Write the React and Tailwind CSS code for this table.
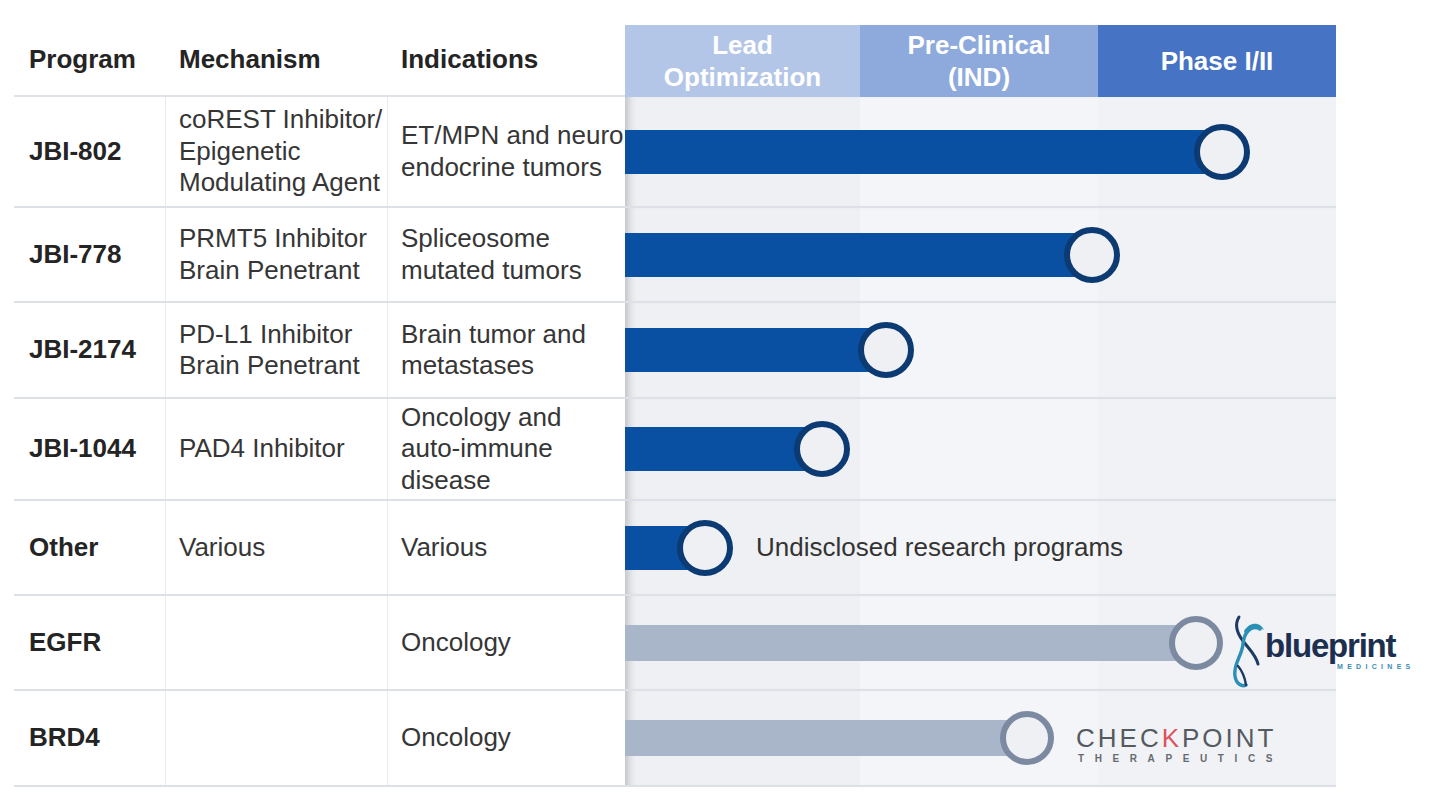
const rows = [
  { prog: 'JBI-802', mech: ['coREST Inhibitor/', 'Epigenetic', 'Modulating Agent'], ind: ['ET/MPN and neuro', 'endocrine tumors'], h: 'h-[111px]', pos: 597 },
  { prog: 'JBI-778', mech: ['PRMT5 Inhibitor', 'Brain Penetrant'], ind: ['Spliceosome', 'mutated tumors'], h: 'h-[95px]', pos: 467 },
  { prog: 'JBI-2174', mech: ['PD-L1 Inhibitor', 'Brain Penetrant'], ind: ['Brain tumor and', 'metastases'], h: 'h-[96px]', pos: 261 },
  { prog: 'JBI-1044', mech: ['PAD4 Inhibitor'], ind: ['Oncology and', 'auto-immune', 'disease'], h: 'h-[102px]', pos: 197 },
  { prog: 'Other', mech: ['Various'], ind: ['Various'], h: 'h-[95px]', pos: 80, note: 'Undisclosed research programs' },
  { prog: 'EGFR', mech: [], ind: ['Oncology'], h: 'h-[95px]', pos: 571, partner: 'blueprint' },
  { prog: 'BRD4', mech: [], ind: ['Oncology'], h: 'h-[96px]', pos: 402, partner: 'checkpoint' },
];

const BlueprintLogo = () => (
  <div className="ml-[6px] mt-[16px] flex shrink-0 items-center">
    <svg width="36" height="74" viewBox="0 0 36 74" className="shrink-0">
      <path d="M10 3 C 5 11, 8 19, 14 27 C 20 35, 27 41, 29 50" fill="none" stroke="#1c3a63" strokeWidth="3" strokeLinecap="round" />
      <path d="M31 15 C 23 10, 15 18, 14 30 C 13 42, 4 50, 6 62 C 7 70, 13 73, 17 71" fill="none" stroke="#2c8fb6" strokeWidth="3.4" strokeLinecap="round" />
      <path d="M15 17 C 20 8, 31 7, 35 16 C 29 12, 22 13, 17 22 Z" fill="#2c8fb6" />
      <path d="M9 52 C 14 58, 16 64, 17 71" fill="none" stroke="#1c3a63" strokeWidth="2.4" strokeLinecap="round" />
    </svg>
    <div className="flex flex-col">
      <span className="text-[33px] font-bold leading-[32px] tracking-[-1.2px] text-[#1d2f4f]">blueprint</span>
      <span className="ml-[72px] text-[7px] font-bold leading-[10px] tracking-[4.3px] text-[#3b8db0]">MEDICINES</span>
    </div>
  </div>
);

const CheckpointLogo = () => (
  <div className="ml-[22px] mt-[14px] flex shrink-0 flex-col">
    <span className="text-[26px] leading-[28px] tracking-[3px] text-[#555a60]">
      CHEC<span className="text-[#e0525c]">K</span>POINT
    </span>
    <span className="pl-[2px] text-[10px] font-bold leading-[14px] tracking-[10.6px] text-[#666a70]">THERAPEUTICS</span>
  </div>
);

const Track = ({ row }) => {
  const gray = !!row.partner;
  return (
    <div className="flex items-center">
      <div
        className={gray ? 'h-[36px] shrink-0 bg-[#a9b5c9]' : 'h-[44px] shrink-0 bg-[#0a50a2]'}
        style={{ width: row.pos }}
      />
      <div
        className={
          gray
            ? '-ml-[27px] size-[54px] shrink-0 rounded-full border-[6px] border-[#7b8aa1] bg-[#eef0f4]'
            : '-ml-[28px] size-[56px] shrink-0 rounded-full border-[6px] border-[#0c3a72] bg-[#eef0f4]'
        }
      />
      {row.note && <span className="ml-[23px] shrink-0 whitespace-nowrap text-[#333]">{row.note}</span>}
      {row.partner === 'blueprint' && <BlueprintLogo />}
      {row.partner === 'checkpoint' && <CheckpointLogo />}
    </div>
  );
};

export default function App() {
  return (
    <div className="h-[812px] w-[1440px] overflow-hidden bg-white pl-[14px] pt-[25px] font-['Liberation_Sans',Arial,sans-serif] text-[26px] leading-[31.5px] text-[#363636]">
      <div className="w-[1322px]">
        <div className="grid h-[72px] grid-cols-[151px_222px_238px_235px_238px_238px] font-bold">
          <div className="flex items-center border-b-2 border-[#dfe2e8] pl-[15px] text-[#242424]">Program</div>
          <div className="flex items-center border-b-2 border-[#dfe2e8] pl-[14px] text-[#242424]">Mechanism</div>
          <div className="flex items-center border-b-2 border-[#dfe2e8] pl-[14px] text-[#242424]">Indications</div>
          <div className="flex items-center justify-center bg-[#b4c6e7] text-center leading-[32px] text-white">
            Lead<br />Optimization
          </div>
          <div className="flex items-center justify-center bg-[#8eaadc] text-center leading-[32px] text-white">
            Pre-Clinical<br />(IND)
          </div>
          <div className="flex items-center justify-center bg-[#4673c4] text-center leading-[32px] text-white">
            Phase I/II
          </div>
        </div>

        {rows.map((row) => (
          <div key={row.prog} className={`grid grid-cols-[151px_222px_238px_711px] border-b-2 border-[#dde0e6] ${row.h}`}>
            <div className="flex items-center pl-[15px] font-bold text-[#242424]">{row.prog}</div>
            <div className="flex flex-col justify-center border-l border-[#e8eaef] pl-[13px]">
              {row.mech.map((l) => (
                <span key={l}>{l}</span>
              ))}
            </div>
            <div className="flex flex-col justify-center whitespace-nowrap border-l border-[#e8eaef] pl-[13px]">
              {row.ind.map((l) => (
                <span key={l}>{l}</span>
              ))}
            </div>
            <div className="relative z-10 flex items-center bg-[linear-gradient(to_right,#eef0f4_0,#eef0f4_235px,#f4f5f8_235px,#f4f5f8_473px,#f1f2f6_473px)] shadow-[inset_10px_0_8px_-7px_rgba(0,0,0,0.22)]">
              <Track row={row} />
            </div>
          </div>
        ))}
      </div>
    </div>
  );
}
